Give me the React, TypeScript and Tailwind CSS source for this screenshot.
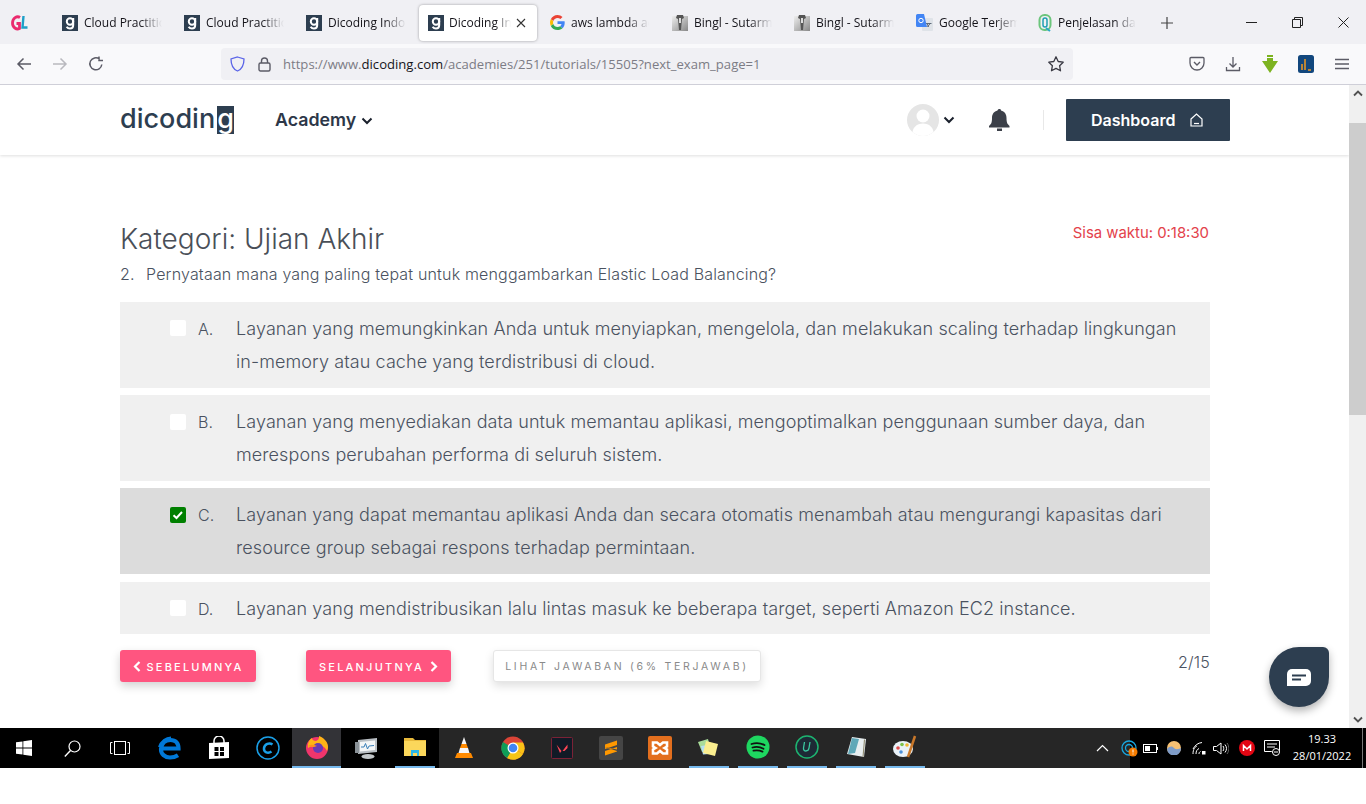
import React from "react";

const BODY = "font-['Inter','Lato',sans-serif]";
const UI = "font-['Open_Sans','Noto_Sans',sans-serif]";

function DicodingFav() {
  return (
    <svg width="16" height="16" viewBox="0 0 16 16" className="shrink-0">
      <rect width="16" height="16" fill="#2d3e50" />
      <circle cx="8" cy="6.500" r="3.200" fill="none" stroke="#fff" strokeWidth="2" />
      <path d="M11.200 3v7c0 2.600-1.600 3.600-3.200 3.600S5.400 13 4.600 11.800" fill="none" stroke="#fff" strokeWidth="2" />
    </svg>
  );
}
function GoogleG({ size = 15 }: { size?: number }) {
  return (
    <svg width={size} height={size} viewBox="0 0 48 48" className="shrink-0">
      <path fill="#EA4335" d="M24 9.500c3.500 0 6.700 1.200 9.200 3.600l6.900-6.900C35.900 2.400 30.500 0 24 0 14.600 0 6.500 5.400 2.600 13.200l8 6.200C12.500 13.700 17.800 9.500 24 9.500z" />
      <path fill="#4285F4" d="M47 24.500c0-1.600-.1-3.100-.4-4.500H24v9h12.900c-.6 3-2.200 5.500-4.700 7.200l7.700 6c4.500-4.200 7.100-10.300 7.100-17.700z" />
      <path fill="#FBBC05" d="M10.500 28.600c-.5-1.400-.8-3-.8-4.600s.3-3.200.8-4.600l-8-6.200C.9 16.500 0 20.100 0 24s.9 7.500 2.600 10.800l7.900-6.200z" />
      <path fill="#34A853" d="M24 48c6.500 0 11.900-2.100 15.900-5.800l-7.700-6c-2.200 1.400-4.900 2.300-8.200 2.300-6.200 0-11.500-4.200-13.400-9.900l-8 6.200C6.500 42.600 14.600 48 24 48z" />
    </svg>
  );
}
function BinglFav({ id }: { id: string }) {
  return (
    <svg width="16" height="17" viewBox="0 0 16 17" className="shrink-0">
      <defs>
        <linearGradient id={id} x1="0" y1="0" x2="1" y2="1">
          <stop offset="0" stopColor="#eee" />
          <stop offset="1" stopColor="#888" />
        </linearGradient>
      </defs>
      <rect y="2" width="16" height="15" fill={`url(#${id})`} />
      <path d="M5 1h6l1 3-2 1-1 11H7L6 5 4 4z" fill="#555" />
      <rect x="7" y="4" width="2" height="5" fill="#ddd" />
    </svg>
  );
}
function TranslateFav() {
  return (
    <svg width="17" height="18" viewBox="0 0 17 18" className="shrink-0">
      <rect x="6" y="4" width="11" height="13" rx="1" fill="#dfe3e8" />
      <path d="M11 9l1.500 4M14.500 9l-3 4M10 9.500h5.500" stroke="#5f6b7a" strokeWidth="1" fill="none" />
      <path d="M1.500 0H8l3 13H1.500A1.500 1.500 0 0 1 0 11.500v-10A1.500 1.500 0 0 1 1.500 0z" fill="#4285f4" />
      <circle cx="5" cy="6.500" r="2.200" fill="none" stroke="#fff" strokeWidth="1" />
    </svg>
  );
}
function PenjelasanFav() {
  return (
    <svg width="14" height="18" viewBox="0 0 14 18" className="shrink-0">
      <rect x="1.500" y="1" width="11" height="15" rx="5" fill="none" stroke="#6cc57c" strokeWidth="2" />
      <rect x="5" y="4" width="4" height="9" rx="2" fill="none" stroke="#1f9fb0" strokeWidth="1.500" />
      <path d="M8 14l4 3" stroke="#2aa8c4" strokeWidth="2" />
    </svg>
  );
}
function GLFav() {
  return (
    <svg width="18" height="18" viewBox="0 0 18 18" className="shrink-0">
      <path d="M9 3.500C6 1.500 1.500 4 1.500 9c0 4.500 4 7 7 5.500V9.500H5.500" fill="none" stroke="#ea2a6e" strokeWidth="2.800" />
      <path d="M12.500 2L11.500 13.500H16.500" fill="none" stroke="#1e9fc8" strokeWidth="2.400" />
    </svg>
  );
}

const tabs: { icon: React.ReactNode; title: string }[] = [
  { icon: <DicodingFav />, title: "Cloud Practitioner" },
  { icon: <DicodingFav />, title: "Cloud Practitioner" },
  { icon: <DicodingFav />, title: "Dicoding Indonesia" },
  { icon: <DicodingFav />, title: "Dicoding Indonesia" },
  { icon: <GoogleG />, title: "aws lambda adalah" },
  { icon: <BinglFav id="bga" />, title: "Bingl - Sutarman" },
  { icon: <BinglFav id="bgb" />, title: "Bingl - Sutarman" },
  { icon: <TranslateFav />, title: "Google Terjemahan" },
  { icon: <PenjelasanFav />, title: "Penjelasan dan" },
];

function TabBar() {
  return (
    <div className={`flex h-11 items-center bg-[#f0f0f4] pt-[1px] text-[12px] text-[#15141a] ${UI}`}>
      <div className="flex w-[53px] justify-start pl-[11px]">
        <GLFav />
      </div>
      {tabs.map((t, i) =>
        i === 3 ? (
          <div key={i} className="mr-[4px] flex h-[36px] w-[118px] items-center gap-[5px] rounded-[4px] bg-white pl-[9px] shadow-[0_0_3px_rgba(0,0,0,0.35)]">
            {t.icon}
            <span className="w-[62px] overflow-hidden whitespace-nowrap [mask-image:linear-gradient(to_right,black_75%,transparent)]">{t.title}</span>
            <svg width="10" height="10" viewBox="0 0 10 10">
              <path d="M1 1l8 8M9 1l-8 8" stroke="#333" strokeWidth="1.100" />
            </svg>
          </div>
        ) : (
          <div key={i} className="flex h-10 w-[122px] items-center gap-[6px] pl-[9px]">
            {t.icon}
            <span className="w-[78px] overflow-hidden whitespace-nowrap [mask-image:linear-gradient(to_right,black_72%,transparent)]">{t.title}</span>
          </div>
        ),
      )}
      <svg width="12" height="12" viewBox="0 0 12 12" className="ml-[10px]">
        <path d="M6 0v12M0 6h12" stroke="#444" strokeWidth="1.200" />
      </svg>
      <div className="ml-auto flex">
        <div className="flex w-[46px] justify-center">
          <svg width="11" height="11" viewBox="0 0 11 11"><path d="M0 5.500h11" stroke="#222" /></svg>
        </div>
        <div className="flex w-[46px] justify-center">
          <svg width="11" height="11" viewBox="0 0 11 11"><path d="M.5 2.500h8v8h-8zM2.500 2.500v-2h8v8h-2" fill="none" stroke="#222" /></svg>
        </div>
        <div className="flex w-[46px] justify-center">
          <svg width="11" height="11" viewBox="0 0 11 11"><path d="M.5.500l10 10M10.500.500l-10 10" stroke="#222" /></svg>
        </div>
      </div>
    </div>
  );
}

function Toolbar() {
  return (
    <div className="flex h-[41px] items-center border-b border-[#cfcfd8] bg-[#f9f9fb]">
      <div className="flex w-[221px] items-center pl-[16px]">
        <svg width="16" height="16" viewBox="0 0 16 16"><path d="M15 8H2M7.500 2.500L2 8l5.500 5.500" fill="none" stroke="#5b5b66" strokeWidth="1.500" /></svg>
        <svg width="16" height="16" viewBox="0 0 16 16" className="ml-[20px]"><path d="M1 8h13M8.500 2.500L14 8l-5.500 5.500" fill="none" stroke="#b9b9bf" strokeWidth="1.500" /></svg>
        <svg width="16" height="16" viewBox="0 0 16 16" className="ml-[20px]"><path d="M13.800 8.500A6 6 0 1 1 11.500 3M11 .5v4h4" fill="none" stroke="#5b5b66" strokeWidth="1.500" /></svg>
      </div>
      <div className={`flex h-8 w-[852px] items-center rounded-[4px] bg-[#f0f0f4] pl-[9px] pr-[8px] text-[13.100px] ${UI}`}>
        <svg width="15" height="16" viewBox="0 0 15 16"><path d="M7.500 1L14 3c0 6-1.500 10-6.500 12C2.500 13 1 9 1 3z" fill="none" stroke="#5a64e8" strokeWidth="1.300" /></svg>
        <svg width="13" height="15" viewBox="0 0 13 15" className="ml-[13px]"><rect x="1" y="6" width="11" height="8" rx="1.500" fill="none" stroke="#5b5b66" strokeWidth="1.400" /><path d="M3.500 6V4a3 3 0 0 1 6 0v2" fill="none" stroke="#5b5b66" strokeWidth="1.400" /></svg>
        <span className="ml-[12px] pt-[1px] text-[#7c7c85]">https://www.<span className="text-[#15141a]">dicoding.com</span>/academies/251/tutorials/15505?next_exam_page=1</span>
        <svg width="18" height="18" viewBox="0 0 18 18" className="ml-auto"><path d="M9 1.800l2.200 4.700 5 .7-3.600 3.500.9 5.100L9 13.400l-4.500 2.400.9-5.100L1.800 7.200l5-.7z" fill="none" stroke="#3a3a44" strokeWidth="1.300" strokeLinejoin="round" /></svg>
      </div>
      <div className="ml-[116px] flex items-center">
        <svg width="16" height="16" viewBox="0 0 16 16"><path d="M2 1.500h12A1 1 0 0 1 15 2.500V7a7 7 0 0 1-14 0V2.500a1 1 0 0 1 1-1z" fill="none" stroke="#5b5b66" strokeWidth="1.300" /><path d="M5 6l3 3 3-3" fill="none" stroke="#5b5b66" strokeWidth="1.400" /></svg>
        <svg width="16" height="16" viewBox="0 0 16 16" className="ml-[20px]"><path d="M8 1v9.500M4.500 7.500L8 11l3.500-3.500M1.500 11v3.500h13V11" fill="none" stroke="#5b5b66" strokeWidth="1.300" /></svg>
        <svg width="16" height="18" viewBox="0 0 16 18" className="ml-[21px]"><path d="M5 0h6v2H5zM5 3h6v3h5l-8 12L0 6h5z" fill="#7db321" /></svg>
        <svg width="16" height="18" viewBox="0 0 16 18" className="ml-[20px]"><rect width="16" height="18" rx="2.500" fill="#12477d" /><path d="M4 15V9M7 15V4" stroke="#f19a1f" strokeWidth="1.500" /><path d="M10 15h3" stroke="#f19a1f" strokeWidth="1.500" /></svg>
        <svg width="14" height="12" viewBox="0 0 14 12" className="ml-[21px]"><path d="M0 1.500h14M0 6h14M0 10.500h14" stroke="#5b5b66" strokeWidth="1.300" /></svg>
      </div>
    </div>
  );
}

function Navbar() {
  return (
    <div className={`flex h-[70px] shrink-0 items-center bg-white pl-[120px] pr-[119px] shadow-[0_1px_3px_rgba(0,0,0,0.13)] ${BODY}`}>
      <div className="flex h-[28px] items-start">
        <span className="w-[97px] whitespace-nowrap text-[27px] font-medium leading-[26px] text-[#2d3e50]">dicodin</span>
        <span className="flex h-[28px] w-[17px] justify-center overflow-hidden bg-[#2d3e50] text-[27px] font-medium leading-[26px] text-white">g</span>
      </div>
      <span className="ml-[41px] pt-[1px] text-[17.800px] font-semibold text-[#2d3748]">Academy</span>
      <svg width="12" height="8" viewBox="0 0 12 8" className="ml-[5px] mt-[1px]"><path d="M1.500 1.500L6 6l4.500-4.500" fill="none" stroke="#1a202c" strokeWidth="2" /></svg>
      <div className="ml-auto flex items-center">
        <svg width="32" height="32" viewBox="0 0 32 32"><defs><clipPath id="av"><circle cx="16" cy="16" r="16" /></clipPath></defs><g clipPath="url(#av)"><rect width="32" height="32" fill="#e5e5e5" /><circle cx="16" cy="12" r="6.500" fill="#fff" /><path d="M5 32c0-9 5-12.500 11-12.500S27 23 27 32z" fill="#fff" /></g></svg>
        <svg width="12" height="8" viewBox="0 0 12 8" className="ml-[4px]"><path d="M1.500 1.500L6 6l4.500-4.500" fill="none" stroke="#1a202c" strokeWidth="2" /></svg>
        <svg width="21" height="22" viewBox="0 0 21 22" className="ml-[34px] mr-[33px]"><path d="M10.500 0c1 0 1.500.7 1.500 1.500 3.500.8 5.500 3.700 5.500 7.500 0 5 1 6 3 8v1.500H0V17c2-2 3-3 3-8 0-3.800 2-6.700 5.500-7.500C8.500.7 9.500 0 10.500 0z" fill="#3c4049" /><rect x="8" y="19.500" width="5" height="2.500" fill="#3c4049" /></svg>
        <div className="h-[20px] w-[1px] bg-[#e8e8e8]" />
        <div className="ml-[22px] flex h-[42px] w-[164px] items-center rounded-[1px] bg-[#2d3e50] pl-[25px] text-[16px] font-semibold text-white">
          Dashboard
          <svg width="13" height="14" viewBox="0 0 13 14" className="ml-[15px]"><path d="M1 6L6.500 1 12 6v7H1z" fill="none" stroke="#fff" strokeWidth="1.200" /><path d="M4 10.500h5" stroke="#fff" strokeWidth="1.200" /></svg>
        </div>
      </div>
    </div>
  );
}

const options = [
  { k: "A.", t: "Layanan yang memungkinkan Anda untuk menyiapkan, mengelola, dan melakukan scaling terhadap lingkungan", t2: "in-memory atau cache yang terdistribusi di cloud." },
  { k: "B.", t: "Layanan yang menyediakan data untuk memantau aplikasi, mengoptimalkan penggunaan sumber daya, dan", t2: "merespons perubahan performa di seluruh sistem." },
  { k: "C.", t: "Layanan yang dapat memantau aplikasi Anda dan secara otomatis menambah atau mengurangi kapasitas dari", t2: "resource group sebagai respons terhadap permintaan.", on: true },
  { k: "D.", t: "Layanan yang mendistribusikan lalu lintas masuk ke beberapa target, seperti Amazon EC2 instance." },
];

function Option({ k, t, t2, on }: { k: string; t: string; t2?: string; on?: boolean }) {
  return (
    <div className={`flex pb-[9px] pl-[50px] pt-[11px] font-[350] leading-[32.800px] text-[#4a5260] ${on ? "bg-[#dcdcdc]" : "bg-[#f0f0f0]"}`}>
      <div className="flex h-[32.800px] w-[28px] shrink-0 items-center pb-[2px]">
        {on ? (
          <svg width="16" height="16" viewBox="0 0 16 16"><rect width="16" height="16" rx="2" fill="#008000" /><path d="M3.500 8.200l3 2.800 5.500-6" fill="none" stroke="#fff" strokeWidth="2" /></svg>
        ) : (
          <div className="h-4 w-4 rounded-[2px] bg-white" />
        )}
      </div>
      <div className="w-[38px] shrink-0 text-[16px]">{k}</div>
      <div className="whitespace-nowrap text-[18px] tracking-[0.09px]">
        {t}
        {t2 && <br />}
        {t2}
      </div>
    </div>
  );
}

function Content() {
  return (
    <div className={`ml-[120px] w-[1090px] pt-[64px] ${BODY}`}>
      <div className="flex items-start justify-between">
        <h1 className="text-[28px] font-light leading-[40px] text-[#4a4f58]">Kategori: Ujian Akhir</h1>
        <span className="mt-[2px] pr-[1px] text-[14.900px] font-normal leading-[24px] text-[#e3424b]">Sisa waktu: 0:18:30</span>
      </div>
      <div className="mt-[3px] flex text-[16px] font-[350] leading-[24px] tracking-[0.17px] text-[#4a5260]">
        <span className="w-[26px]">2.</span>
        <span>Pernyataan mana yang paling tepat untuk menggambarkan Elastic Load Balancing?</span>
      </div>
      <div className="mt-[16px] flex flex-col gap-[7.600px]">
        {options.map((o) => (
          <Option key={o.k} {...o} />
        ))}
      </div>
      <div className="mt-[16px] flex items-start">
        <div className="flex h-8 w-[136px] items-center justify-center gap-[6px] rounded-[3px] bg-[#ff5580] text-[11px] font-medium tracking-[2.200px] text-white shadow-[0_4px_10px_rgba(0,0,0,0.18)]">
          <svg width="8" height="11" viewBox="0 0 8 11"><path d="M6.500 1L2 5.500 6.500 10" fill="none" stroke="#fff" strokeWidth="2.200" /></svg>
          <span className="pt-[1px]">SEBELUMNYA</span>
        </div>
        <div className="ml-[50px] flex h-8 w-[145px] items-center justify-center gap-[6px] rounded-[3px] bg-[#ff5580] text-[11px] font-medium tracking-[2.200px] text-white shadow-[0_4px_10px_rgba(0,0,0,0.18)]">
          <span className="pt-[1px]">SELANJUTNYA</span>
          <svg width="8" height="11" viewBox="0 0 8 11"><path d="M1.500 1L6 5.500 1.500 10" fill="none" stroke="#fff" strokeWidth="2.200" /></svg>
        </div>
        <div className="ml-[42px] flex h-8 w-[268px] items-center justify-center rounded-[3px] border border-[#e6e6e6] bg-white pt-[1px] text-[10.500px] tracking-[2.700px] text-[#8a8a8a] shadow-[0_4px_10px_rgba(0,0,0,0.13)]">
          LIHAT JAWABAN (6% TERJAWAB)
        </div>
        <span className="ml-auto text-[16px] font-[350] leading-[24px] tracking-[0.2px] text-[#4a5260]">2/15</span>
      </div>
    </div>
  );
}

function Scrollbar() {
  return (
    <div className="flex w-[17px] shrink-0 flex-col bg-[#f0f0f0]">
      <div className="flex h-[17px] items-center justify-center">
        <svg width="10" height="7" viewBox="0 0 10 7"><path d="M1 5.500l4-4 4 4" fill="none" stroke="#505050" strokeWidth="1.800" /></svg>
      </div>
      <div className="mt-[21px] h-[292px] bg-[#cdcdcd]" />
      <div className="mt-auto flex h-[17px] items-center justify-center">
        <svg width="10" height="7" viewBox="0 0 10 7"><path d="M1 1.500l4 4 4-4" fill="none" stroke="#505050" strokeWidth="1.800" /></svg>
      </div>
    </div>
  );
}

type TI = { n: React.ReactNode; bar?: "active" | "open" };
const I = ({ children, w = 24, h = 24 }: { children: React.ReactNode; w?: number; h?: number }) => (
  <svg width={w} height={h} viewBox={`0 0 ${w} ${h}`}>{children}</svg>
);
const taskItems: TI[] = [
  { n: <I><path d="M5 12.500h15.500C20.500 7 17.500 4 12.500 4 7 4 3.500 8 3 13c-.3 5 4 8.500 9 8.500 3 0 5.500-.7 8-2.300" fill="none" stroke="#0078d7" strokeWidth="4.200" /><path d="M1 11C3 5 8 1.500 13 1.500" fill="none" stroke="#0078d7" strokeWidth="2" /></I> },
  { n: <I><path d="M7 8V5a5 5 0 0 1 10 0v3" fill="none" stroke="#fff" strokeWidth="1.500" /><path d="M2 7l20-1v16l-20 1z" fill="#fff" /><path d="M7.500 11h4v4h-4zM13 11h4v4h-4zM7.500 16h4v4h-4zM13 16h4v4h-4z" fill="#000" /></I> },
  { n: <I><circle cx="12" cy="12" r="11" fill="none" stroke="#1aa0e8" strokeWidth="1.500" /><path d="M16.500 8.500A5.500 5.500 0 0 0 8 12c-.5 4.500 4 6 7.500 3.500" fill="none" stroke="#1aa0e8" strokeWidth="2.500" /></I> },
  { bar: "active", n: <I><circle cx="12" cy="13" r="11" fill="#f0356c" /><path d="M3 13C2 8 5 4 7 3c0 2 2 3 4 3 3-1 3-3 3-5 5 2 9 6 9 11 0 1-.5 3-1 4-4-8-13-6-19-3z" fill="#ffb317" /><circle cx="13" cy="13" r="5" fill="#6a3ab5" /><path d="M3 11c3-2 6-1 9 0-2 1-4 1-6 1z" fill="#ff8f1f" /></I> },
  { n: <I><path d="M4 4l19-2v14L4 18z" fill="#b9bfc4" /><path d="M6 6l15-1.500v9.500L6 15.500z" fill="#f4f6f7" /><path d="M7 11h3l1.500-3.500 2 5.500 1.500-3 5-.5" fill="none" stroke="#3a7fb8" /><ellipse cx="14" cy="20.500" rx="6.500" ry="2.500" fill="#c2c7ca" /><rect x="1" y="6" width="4" height="11" fill="#8a9298" /></I> },
  { bar: "open", n: <I><path d="M1 3h9l2 2h11v3H1z" fill="#e8b93b" /><rect x="1" y="6" width="22" height="15" fill="#fbd75b" /><path d="M8 15h8v6H8z" fill="#2ab7e9" /><rect x="10" y="18" width="4" height="3" fill="#fbd75b" /></I> },
  { n: <I><path d="M12 1l2.500 7h-5z" fill="#f6f6f6" /><path d="M9.500 8h5l1.500 4H8z" fill="#ff8a00" /><path d="M8 12h8l1.500 5h-11z" fill="#f6f6f6" /><path d="M5 17h14l2 5H3z" fill="#ff8a00" /></I> },
  { n: <I><circle cx="12" cy="12" r="11.500" fill="#db4437" /><path d="M12 12L22 18A11.500 11.500 0 0 1 6 22z" fill="#f5c518" /><path d="M12 12L6 22A11.500 11.500 0 0 1 2 6z" fill="#0f9d58" /><path d="M12 6.500h10A11.500 11.500 0 0 1 22 18L17 15z" fill="#fbc116" /><circle cx="12" cy="12" r="5.500" fill="#fff" /><circle cx="12" cy="12" r="4.300" fill="#4285f4" /></I> },
  { n: <I><rect x="1.500" y="1.500" width="21" height="21" rx="1" fill="#111a26" stroke="#7b2236" /><path d="M6.500 8.500l5 6.500-1.500 2zM17.500 8.500v3.500l-3 3h-2z" fill="#ff4655" /></I> },
  { n: <I><rect width="24" height="24" rx="2" fill="#454545" /><path d="M18 4.500v4.500L6 13V8.500zM6 11l12 4v-1.500zM18 11v4.500L6 19.500V15z" fill="#ff9800" /></I> },
  { n: <I><rect width="24" height="24" rx="2" fill="#e36f1e" /><path d="M5 6.500h4l3 2.500 3-2.500h4v4l-2.500 1.500 2.500 1.500v4h-4l-3-2.500-3 2.500H5v-4L7.500 12 5 10.500z" fill="none" stroke="#fff" strokeWidth="2.600" /></I> },
  { bar: "open", n: <I><path d="M1 7l10-3 3 11-9 2z" fill="#a9dc9a" /><path d="M4 11l7-1 1 9-6 .5z" fill="#b6dff5" /><path d="M9 6l12 3-3 12-12-3z" fill="#fbee8f" /></I> },
  { bar: "open", n: <I><circle cx="12" cy="12" r="11.500" fill="#1ed760" /><path d="M5.500 9c4-1.200 9-1 13 1M6.500 12.500c3.500-1 7.500-.7 11 1.200M7.500 15.700c3-.7 6-.5 9 .9" fill="none" stroke="#111" strokeWidth="1.800" strokeLinecap="round" /></I> },
  { bar: "open", n: <I><circle cx="12" cy="12" r="11" fill="#1d2a35" stroke="#1db470" strokeWidth="1.500" /><path d="M9.500 7l-1 6c-.5 4 5 4 5.500 0l1-6" fill="none" stroke="#3cc8a0" strokeWidth="1.300" /></I> },
  { bar: "open", n: <I><path d="M8 2l14 2-2 18L3 19z" fill="#e8eef0" /><path d="M8 3l7 1-4 14-7 1z" fill="#5fa8b8" /><path d="M20 4l1 1-1.500 17-1-.2z" fill="#8f8a70" /></I> },
  { bar: "open", n: <I><ellipse cx="10" cy="14" rx="10" ry="8" fill="#eaf2f8" /><circle cx="5" cy="13" r="1.800" fill="#de4c4c" /><circle cx="9" cy="9.500" r="1.800" fill="#7dc24b" /><circle cx="14" cy="10" r="1.800" fill="#f2b632" /><circle cx="8" cy="17" r="1.800" fill="#4b90d9" /><path d="M22 1l-7 21" stroke="#c9782a" strokeWidth="2.500" /></I> },
];

function Taskbar() {
  return (
    <div className={`relative flex h-10 shrink-0 bg-black ${UI}`}>
      <div className="flex h-10">
        <div className="flex w-12 items-center justify-center">
          <svg width="16" height="16" viewBox="0 0 16 16"><path d="M0 2.300l6.500-.9v6.200H0zM7.300 1.300L16 0v7.600H7.300zM0 8.400h6.500v6.200L0 13.700zM7.300 8.400H16V16l-8.700-1.300z" fill="#fff" /></svg>
        </div>
        <div className="flex w-12 items-center justify-center">
          <svg width="17" height="17" viewBox="0 0 17 17"><circle cx="10.500" cy="6.500" r="5.500" fill="none" stroke="#fff" strokeWidth="1.200" /><path d="M6.500 10.500L.8 16.500" stroke="#fff" strokeWidth="1.400" /></svg>
        </div>
        <div className="mr-[1px] flex w-12 items-center justify-center">
          <svg width="20" height="14" viewBox="0 0 20 14"><rect x="4.500" y=".5" width="11" height="13" fill="none" stroke="#fff" /><path d="M2.500 1.500H.5v11h2M17.500 1.500h2v11h-2" fill="none" stroke="#fff" /></svg>
        </div>
      </div>
      <div className="flex h-10 w-[147px]">
        {taskItems.slice(0, 3).map((t, i) => (
          <div key={i} className="flex w-[49px] items-center justify-center">{t.n}</div>
        ))}
      </div>
      <div className="relative flex h-10 w-[49px] items-center justify-center border-b-[2px] border-[#76b9ed] bg-[#333337]">{taskItems[3].n}</div>
      <div className="flex h-10 w-[49px] items-center justify-center">{taskItems[4].n}</div>
      <div className="flex h-10 w-[49px] items-center justify-center">
        <div className="flex h-10 w-10 items-center justify-center border-b-[2px] border-[#76b9ed]">{taskItems[5].n}</div>
      </div>
      <div className="flex h-10 flex-1 bg-[#262626]">
        {taskItems.slice(6).map((t, i) => (
          <div key={i} className="flex w-[49px] shrink-0 items-center justify-center">
            <div className={`flex h-10 w-10 items-center justify-center ${t.bar ? "border-b-[2px] border-[#76b9ed]" : ""}`}>{t.n}</div>
          </div>
        ))}
        <div className="ml-auto flex w-[56px] items-center justify-center">
          <svg width="13" height="8" viewBox="0 0 13 8"><path d="M1 7l5.500-5.500L12 7" fill="none" stroke="#fff" strokeWidth="1.200" /></svg>
        </div>
      </div>
      <div className="flex h-10 w-[236px] items-center text-white">
        <svg width="17" height="17" viewBox="0 0 17 17" className="ml-[-9px] shrink-0"><circle cx="8" cy="8" r="7" fill="none" stroke="#18a7e0" strokeWidth="1.300" /><circle cx="8" cy="8" r="3.500" fill="none" stroke="#18a7e0" strokeWidth="1.300" /><circle cx="12" cy="12" r="4.500" fill="#f57c00" /><path d="M12 9.500v3M12 13.500v1" stroke="#fff" /></svg>
        <svg width="15" height="9" viewBox="0 0 15 9" className="ml-[5px]"><rect x=".5" y=".5" width="13" height="8" fill="none" stroke="#fff" /><rect x="2" y="2" width="5" height="5" fill="#fff" /><rect x="14" y="3" width="1" height="3" fill="#fff" /></svg>
        <svg width="14" height="14" viewBox="0 0 14 14" className="ml-[9px]"><circle cx="7" cy="7" r="7" fill="#f6c073" /><path d="M0 8c3-3 5-3 7-1s5 1 7 0a7 7 0 0 1-14 1z" fill="#7f9cc8" /></svg>
        <svg width="14" height="13" viewBox="0 0 14 13" className="ml-[11px]"><path d="M1 12c0-5 2-7 4-8M4 12c0-3 1-4.500 3-5.500M1 7c2-4 5-6 9-6.500M7 12c0-1.500.5-2 1.500-2.500" fill="none" stroke="#fff" /><rect x="10" y="9" width="3.500" height="3.500" fill="#fff" /></svg>
        <svg width="16" height="13" viewBox="0 0 16 13" className="ml-[7px]"><path d="M.5 4.500h3L8 1v11L3.500 8.500h-3z" fill="none" stroke="#fff" /><path d="M10 4c1 1.500 1 3.500 0 5M12 2.500c2 2.500 2 5.500 0 8" fill="none" stroke="#fff" /><path d="M14 1c2.500 3.500 2.500 7.500 0 11" fill="none" stroke="#666" /></svg>
        <svg width="16" height="16" viewBox="0 0 16 16" className="ml-[10px]"><circle cx="8" cy="8" r="8" fill="#e30613" /><path d="M4.500 11V5.500L8 9l3.500-3.500V11" fill="none" stroke="#fff" strokeWidth="1.500" /></svg>
        <svg width="16" height="16" viewBox="0 0 16 16" className="ml-[9px]"><path d="M.5.500h15v11h-4l-1 3-3-3h-7z" fill="none" stroke="#fff" /><path d="M3 4h10M3 7h8" stroke="#fff" /><circle cx="12" cy="12" r="3.500" fill="#000" stroke="#fff" /><path d="M10 12h4" stroke="#fff" /></svg>
        <div className="ml-[7px] flex w-[70px] flex-col items-center pb-[2px] text-[11px] leading-[17px]">
          <span>19.33</span>
          <span>28/01/2022</span>
        </div>
        <div className="ml-auto h-10 w-[1px] bg-[#777]" />
        <div className="w-[3px]" />
      </div>
    </div>
  );
}

export default function App() {
  return (
    <div className="flex h-[804px] w-[1366px] flex-col overflow-hidden bg-white">
      <TabBar />
      <Toolbar />
      <div className="relative flex h-[643px] shrink-0 overflow-hidden">
        <div className="min-w-0 flex-1 bg-white">
          <Navbar />
          <Content />
        </div>
        <Scrollbar />
        <div className="absolute left-[1269px] top-[562px] flex h-[60px] w-[60px] items-center justify-center rounded-[30px] rounded-tr-[6px] bg-[#2d3e50] shadow-[0_4px_8px_rgba(0,0,0,0.3)]">
          <svg width="24" height="17" viewBox="0 0 24 17"><path d="M5 0h14a5 5 0 0 1 5 5v7a5 5 0 0 1-5 5H0V5a5 5 0 0 1 5-5z" fill="#fff" /><path d="M5 6.500h14M5 10.500h9" stroke="#2d3e50" strokeWidth="2" /></svg>
        </div>
      </div>
      <Taskbar />
    </div>
  );
}
